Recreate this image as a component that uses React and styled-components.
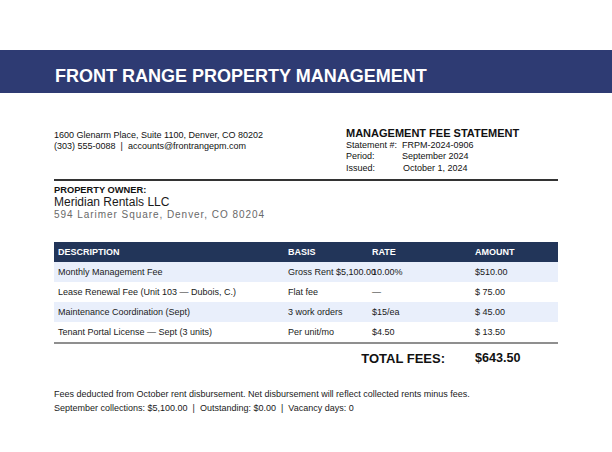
import React from "react";
import styled, { createGlobalStyle } from "styled-components";

const Global = createGlobalStyle`
  html, body { margin: 0; padding: 0; background: #fff; }
  body { font-family: "Liberation Sans", Arial, sans-serif; color: #1a1a1a; }
`;

const Page = styled.div`
  width: 612px;
  min-height: 452px;
  padding-top: 50px;
  box-sizing: border-box;
`;

const Banner = styled.header`
  height: 43px;
  box-sizing: border-box;
  background: #2e3b73;
  padding: 17px 0 0 55px;
`;

const BrandTitle = styled.h1`
  margin: 0;
  font-size: 18px;
  line-height: 18px;
  font-weight: 700;
  color: #fff;
`;

const Body = styled.main`
  padding: 0 54px;
`;

const InfoRow = styled.section`
  display: flex;
  justify-content: space-between;
  align-items: flex-start;
  padding-top: 33.5px;
  padding-bottom: 5px;
  border-bottom: 2px solid #333;
`;

const CompanyBlock = styled.div`
  padding-top: 3.5px;
  font-size: 9px;
  line-height: 11px;
  color: #111;
`;

const Line = styled.div`
  white-space: nowrap;
`;

const StatementBlock = styled.div`
  width: 212px;
  color: #111;
`;

const StatementTitle = styled.h2`
  margin: 0;
  font-size: 11px;
  line-height: 13px;
  font-weight: 700;
`;

const MetaGrid = styled.dl`
  margin: 0;
  display: grid;
  grid-template-columns: 56px auto;
  font-size: 9px;
  line-height: 11.5px;
`;

const MetaLabel = styled.dt`
  margin: 0;
`;

const MetaValue = styled.dd`
  margin: 0;
  padding-left: ${(p) => p.$shift || 0}px;
`;

const OwnerBlock = styled.section`
  padding-top: 5px;
`;

const OwnerLabel = styled.div`
  font-size: 9.3px;
  line-height: 9px;
  font-weight: 700;
  color: #111;
`;

const OwnerName = styled.div`
  margin-top: 0.5px;
  font-size: 12px;
  line-height: 12px;
  color: #1a1a1a;
`;

const OwnerAddress = styled.div`
  font-size: 10px;
  line-height: 14px;
  letter-spacing: 0.95px;
  color: #696969;
  white-space: nowrap;
`;

const FeeTable = styled.table`
  margin-top: 20px;
  width: 504px;
  border-collapse: collapse;
  table-layout: fixed;
  border-bottom: 2px solid #8f8f8f;
`;

const HeadCell = styled.th`
  background: #223559;
  color: #fff;
  font-size: 9px;
  font-weight: 700;
  text-align: left;
  height: 20px;
  padding: 0 0 0 4px;
  white-space: nowrap;
`;

const BodyRow = styled.tr`
  background: ${(p) => (p.$shaded ? "#e9effb" : "#fff")};
`;

const Cell = styled.td`
  font-size: 9px;
  color: #1a1a1a;
  height: 20px;
  padding: 0 0 0 4px;
  white-space: nowrap;
  overflow: visible;
`;

const TotalRow = styled.div`
  display: grid;
  grid-template-columns: 417px 87px;
  height: 29px;
  align-items: center;
  font-size: 13px;
  font-weight: 700;
  color: #111;
`;

const TotalLabel = styled.div`
  text-align: right;
  padding-right: 26px;
`;

const TotalValue = styled.div`
  padding-left: 4px;
  font-size: 12.6px;
`;

const Footer = styled.footer`
  margin-top: 14px;
  font-size: 9px;
  line-height: 14px;
  color: #1a1a1a;
`;

const rows = [
  ["Monthly Management Fee", "Gross Rent $5,100.00", "10.00%", "$510.00"],
  ["Lease Renewal Fee (Unit 103 — Dubois, C.)", "Flat fee", "—", "$ 75.00"],
  ["Maintenance Coordination (Sept)", "3 work orders", "$15/ea", "$ 45.00"],
  ["Tenant Portal License — Sept (3 units)", "Per unit/mo", "$4.50", "$ 13.50"],
];

export default function App() {
  return (
    <Page>
      <Global />
      <Banner>
        <BrandTitle>FRONT RANGE PROPERTY MANAGEMENT</BrandTitle>
      </Banner>
      <Body>
        <InfoRow>
          <CompanyBlock>
            <Line>1600 Glenarm Place, Suite 1100, Denver, CO 80202</Line>
            <Line>(303) 555-0088 &nbsp;|&nbsp; accounts@frontrangepm.com</Line>
          </CompanyBlock>
          <StatementBlock>
            <StatementTitle>MANAGEMENT FEE STATEMENT</StatementTitle>
            <MetaGrid>
              <MetaLabel>Statement #:</MetaLabel>
              <MetaValue>FRPM-2024-0906</MetaValue>
              <MetaLabel>Period:</MetaLabel>
              <MetaValue>September 2024</MetaValue>
              <MetaLabel>Issued:</MetaLabel>
              <MetaValue $shift={1}>October 1, 2024</MetaValue>
            </MetaGrid>
          </StatementBlock>
        </InfoRow>
        <OwnerBlock>
          <OwnerLabel>PROPERTY OWNER:</OwnerLabel>
          <OwnerName>Meridian Rentals LLC</OwnerName>
          <OwnerAddress>594 Larimer Square, Denver, CO 80204</OwnerAddress>
        </OwnerBlock>
        <FeeTable>
          <colgroup>
            <col style={{ width: 230 }} />
            <col style={{ width: 84 }} />
            <col style={{ width: 103 }} />
            <col style={{ width: 87 }} />
          </colgroup>
          <thead>
            <tr>
              <HeadCell>DESCRIPTION</HeadCell>
              <HeadCell>BASIS</HeadCell>
              <HeadCell>RATE</HeadCell>
              <HeadCell>AMOUNT</HeadCell>
            </tr>
          </thead>
          <tbody>
            {rows.map((r, i) => (
              <BodyRow key={i} $shaded={i % 2 === 0}>
                {r.map((c, j) => (
                  <Cell key={j}>{c}</Cell>
                ))}
              </BodyRow>
            ))}
          </tbody>
        </FeeTable>
        <TotalRow>
          <TotalLabel>TOTAL FEES:</TotalLabel>
          <TotalValue>$643.50</TotalValue>
        </TotalRow>
        <Footer>
          <Line>Fees deducted from October rent disbursement. Net disbursement will reflect collected rents minus fees.</Line>
          <Line>September collections: $5,100.00 &nbsp;|&nbsp; Outstanding: $0.00 &nbsp;|&nbsp; Vacancy days: 0</Line>
        </Footer>
      </Body>
    </Page>
  );
}
